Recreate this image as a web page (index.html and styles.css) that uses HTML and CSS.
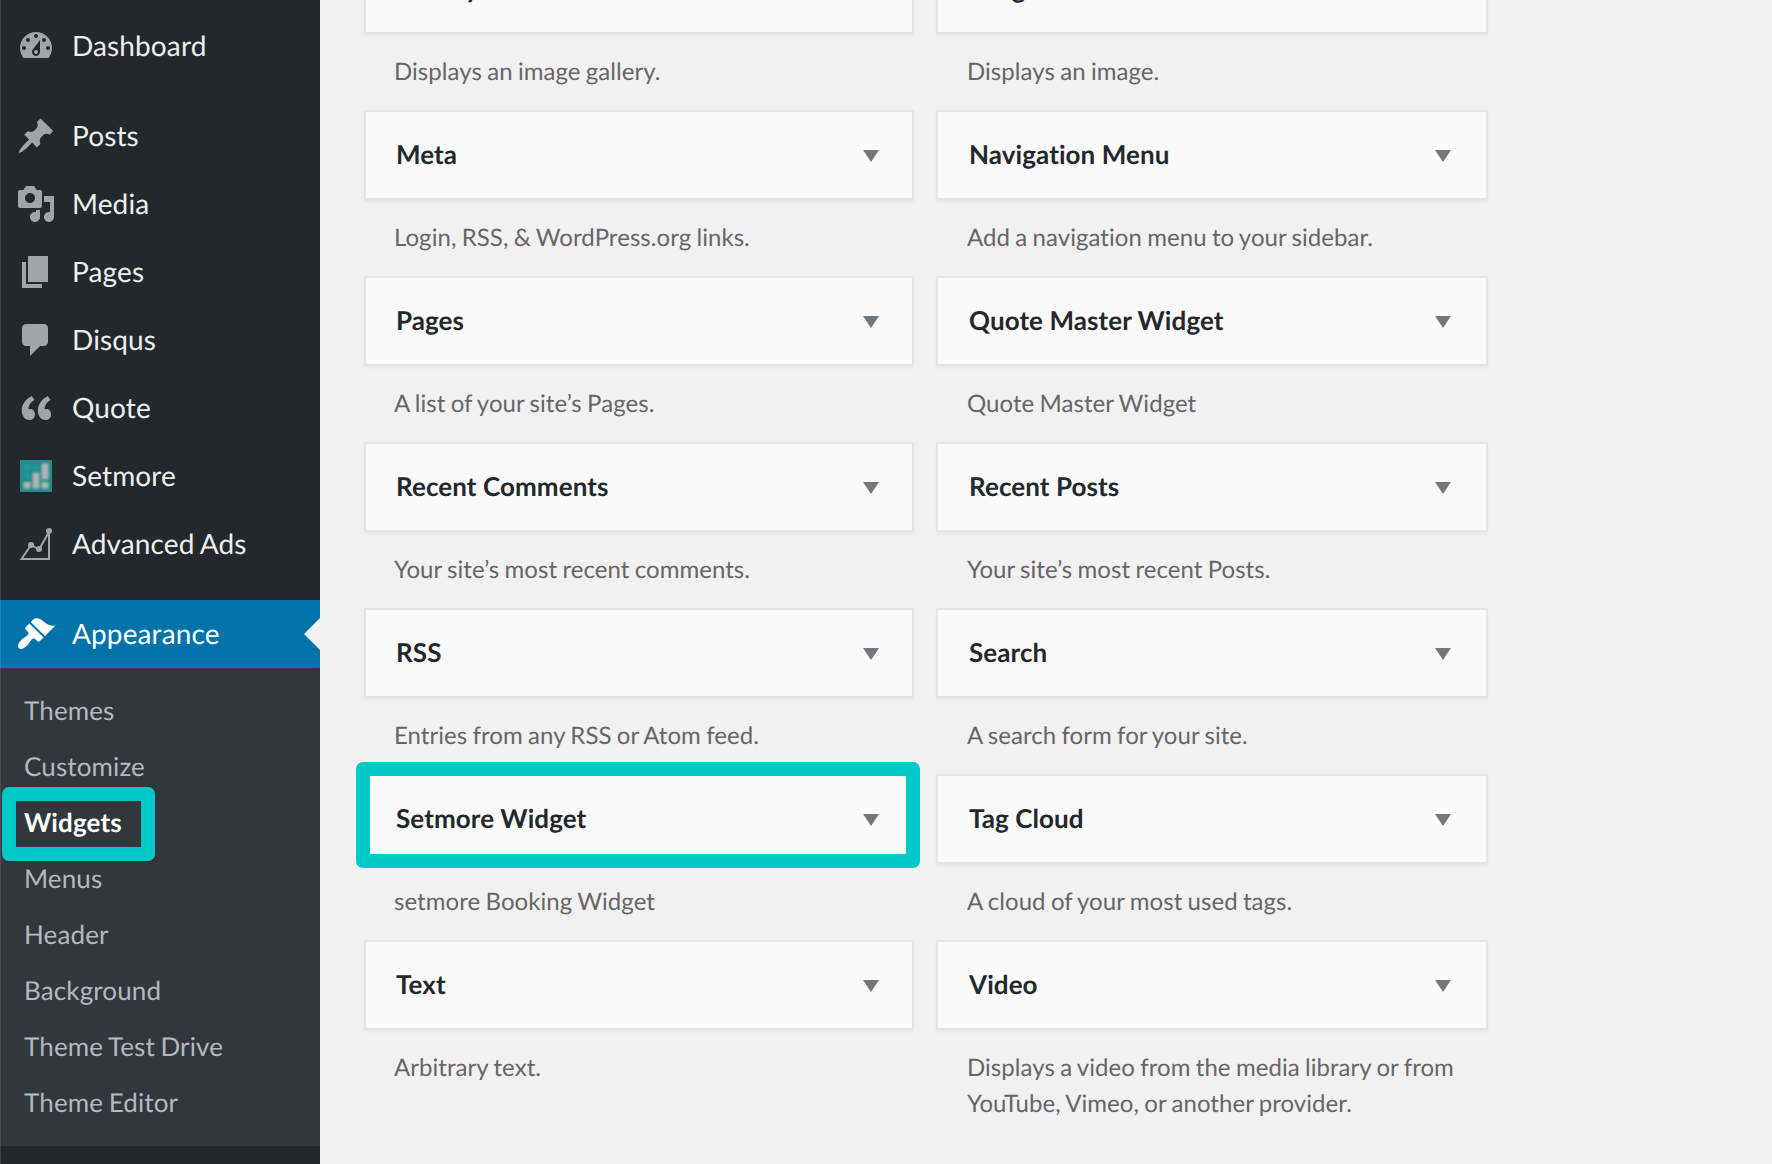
FILE: index.html
```html
<!DOCTYPE html>
<html lang="en">
<head>
<meta charset="utf-8">
<title>Widgets</title>
<link rel="stylesheet" href="styles.css">
</head>
<body>
<div class="layout">
  <nav class="sidebar">
    <ul class="menu">
      <li class="menu-item"><svg class="icon" viewBox="0 0 20 20"><path d="M3.76 16h12.48c1.1-1.37 1.76-3.11 1.76-5 0-4.42-3.58-8-8-8s-8 3.58-8 8c0 1.89.66 3.63 1.76 5zM10 4c.55 0 1 .45 1 1s-.45 1-1 1-1-.45-1-1 .45-1 1-1zM6 6c.55 0 1 .45 1 1s-.45 1-1 1-1-.45-1-1 .45-1 1-1zm8 0c.55 0 1 .45 1 1s-.45 1-1 1-1-.45-1-1 .45-1 1-1zm-5.37 5.55L12 7v6c0 1.1-.9 2-2 2s-2-.9-2-2c0-.57.24-1.08.63-1.45zM4 10c.55 0 1 .45 1 1s-.45 1-1 1-1-.45-1-1 .45-1 1-1zm12 0c.55 0 1 .45 1 1s-.45 1-1 1-1-.45-1-1 .45-1 1-1zm-5 3c0-.55-.45-1-1-1s-1 .45-1 1 .45 1 1 1 1-.45 1-1z"/></svg><span>Dashboard</span></li>
      <li class="menu-item group-start"><svg class="icon" viewBox="0 0 20 20"><path d="M10.44 3.02l1.82-1.82 6.36 6.35-1.83 1.82c-1.05-.68-2.48-.57-3.41.36l-.75.75c-.92.93-1.04 2.35-.35 3.41l-1.83 1.82-2.41-2.41-2.8 2.79c-.42.42-3.38 2.71-3.8 2.29s1.86-3.39 2.28-3.81l2.79-2.79L4.1 9.36l1.83-1.82c1.05.69 2.48.57 3.4-.36l.75-.75c.93-.92 1.05-2.35.36-3.41z"/></svg><span>Posts</span></li>
      <li class="menu-item"><svg class="icon" viewBox="0 0 20 20"><path d="M13 11V4c0-.55-.45-1-1-1h-1.67L9 1H5L3.67 3H2c-.55 0-1 .45-1 1v7c0 .55.45 1 1 1h10c.55 0 1-.45 1-1zM7 4.5c1.38 0 2.5 1.12 2.5 2.5S8.38 9.5 7 9.5 4.500 8.38 4.500 7 5.62 4.500 7 4.500zM14 6h5v10.500c0 1.38-1.12 2.500-2.500 2.500S14 17.88 14 16.500s1.12-2.500 2.500-2.500c.17 0 .34.02.5.05V9h-3V6zm-4 8.05V13h2v3.500c0 1.38-1.12 2.500-2.500 2.500S7 17.88 7 16.500 8.12 14 9.500 14c.17 0 .34.02.5.05z"/></svg><span>Media</span></li>
      <li class="menu-item"><svg class="icon" viewBox="0 0 20 20"><path d="M6 15V2h10v13H6zm-1 1h8v2H3V5h2v11z"/></svg><span>Pages</span></li>
      <li class="menu-item"><svg class="icon" viewBox="0 0 20 20"><path d="M5 2h9c1.1 0 2 .9 2 2v7c0 1.1-.9 2-2 2h-2l-5 5v-5H5c-1.1 0-2-.9-2-2V4c0-1.1.9-2 2-2z"/></svg><span>Disqus</span></li>
      <li class="menu-item"><svg class="icon" viewBox="0 0 20 20"><path d="M9.49 13.22c0-.74-.2-1.38-.61-1.9-.62-.78-1.83-.88-2.53-.72-.29-1.65 1.11-3.75 2.92-4.65L7.88 4c-2.73 1.3-5.42 4.28-4.96 8.05C3.21 14.43 4.59 16 6.54 16c.85 0 1.56-.25 2.12-.75s.83-1.18.83-2.03zm8.05 0c0-.74-.2-1.38-.61-1.9-.63-.78-1.83-.88-2.53-.72-.29-1.65 1.11-3.75 2.92-4.65L15.93 4c-2.73 1.3-5.41 4.28-4.95 8.05.29 2.38 1.66 3.95 3.61 3.95.85 0 1.56-.25 2.12-.75s.83-1.18.83-2.03z"/></svg><span>Quote</span></li>
      <li class="menu-item"><svg class="icon" viewBox="0 0 40 40"><path class="sm-bg" d="M4 4h32v32H4z"/><g class="sm-cells"><path d="M8 8h6v6H8zM16 8h7v6h-7zM8 16h6v7H8z"/></g><g class="sm-bars"><path d="M7.500 26h7v6.500h-7zM16.500 16.500h7v16h-7zM25.500 7.500h7v16h-7zM25.500 26h7v6.500h-7z"/></g></svg><span>Setmore</span></li>
      <li class="menu-item"><svg class="icon" viewBox="0 0 40 40"><path class="chart-line" d="M5.500 35L15 21l8 4.500L33 8v27z"/><circle cx="15" cy="21" r="3"/><circle cx="23" cy="25" r="3"/><circle cx="33" cy="7" r="3"/></svg><span>Advanced Ads</span></li>
      <li class="menu-item group-start current"><svg class="icon" viewBox="0 0 20 20"><path d="M14.48 11.06L7.41 3.99l1.5-1.5c.5-.56 2.3-.47 3.51.32 1.21.8 1.43 1.28 2.91 2.1 1.18.64 2.45 1.26 4.45.85zm-.71.71L6.7 4.7 4.93 6.47c-.39.39-.39 1.02 0 1.41l1.06 1.06c.39.39.39 1.03 0 1.42-.6.6-1.43 1.11-2.21 1.69-.35.26-.7.53-1.01.84C1.43 14.23.4 16.08 1.4 17.07c.99 1 2.84-.03 4.18-1.36.31-.31.58-.66.85-1.02.57-.78 1.08-1.61 1.69-2.21.39-.39 1.02-.39 1.41 0l1.06 1.06c.39.39 1.02.39 1.41 0z"/></svg><span>Appearance</span></li>
    </ul>
    <ul class="submenu">
      <li>Themes</li>
      <li>Customize</li>
      <li class="active">Widgets</li>
      <li>Menus</li>
      <li>Header</li>
      <li>Background</li>
      <li>Theme Test Drive</li>
      <li>Theme Editor</li>
    </ul>
  </nav>
  <main class="widgets">
    <section class="widget"><h3 class="card">Gallery<i class="arrow"></i></h3><p>Displays an image gallery.</p></section>
    <section class="widget"><h3 class="card">Image<i class="arrow"></i></h3><p>Displays an image.</p></section>
    <section class="widget"><h3 class="card">Meta<i class="arrow"></i></h3><p>Login, RSS, &amp; WordPress.org links.</p></section>
    <section class="widget"><h3 class="card">Navigation Menu<i class="arrow"></i></h3><p>Add a navigation menu to your sidebar.</p></section>
    <section class="widget"><h3 class="card">Pages<i class="arrow"></i></h3><p>A list of your site’s Pages.</p></section>
    <section class="widget"><h3 class="card">Quote Master Widget<i class="arrow"></i></h3><p>Quote Master Widget</p></section>
    <section class="widget"><h3 class="card">Recent Comments<i class="arrow"></i></h3><p>Your site’s most recent comments.</p></section>
    <section class="widget"><h3 class="card">Recent Posts<i class="arrow"></i></h3><p>Your site’s most recent Posts.</p></section>
    <section class="widget"><h3 class="card">RSS<i class="arrow"></i></h3><p>Entries from any RSS or Atom feed.</p></section>
    <section class="widget"><h3 class="card">Search<i class="arrow"></i></h3><p>A search form for your site.</p></section>
    <section class="widget"><h3 class="card highlighted">Setmore Widget<i class="arrow"></i></h3><p>setmore Booking Widget</p></section>
    <section class="widget"><h3 class="card">Tag Cloud<i class="arrow"></i></h3><p>A cloud of your most used tags.</p></section>
    <section class="widget"><h3 class="card">Text<i class="arrow"></i></h3><p>Arbitrary text.</p></section>
    <section class="widget"><h3 class="card">Video<i class="arrow"></i></h3><p>Displays a video from the media library or from YouTube, Vimeo, or another provider.</p></section>
  </main>
</div>
</body>
</html>
```
FILE: styles.css
```css
*, *::before, *::after { box-sizing: border-box; }
body {
  margin: 0;
  background: #f1f1f1;
  font-family: Lato, "Liberation Sans", sans-serif;
  font-variant-ligatures: none;
  text-rendering: geometricPrecision;
  overflow: hidden;
}
ul { list-style: none; margin: 0; padding: 0; }
.layout { display: flex; height: 1164px; overflow: hidden; }

.sidebar {
  position: relative;
  flex: none;
  width: 320px;
  padding-top: 12px;
  background: #23282d;
  color: #eee;
  letter-spacing: .12px;
  word-spacing: -1.2px;
}
.sidebar::before {
  content: "";
  position: absolute;
  z-index: 1;
  inset: 0 auto 0 0;
  width: 1px;
  background: rgba(255, 255, 255, .12);
}
.menu-item {
  position: relative;
  display: flex;
  align-items: center;
  gap: 16px;
  height: 68px;
  padding-left: 16px;
  font-size: 28px;
  line-height: 36px;
}
.menu-item span { padding-bottom: 2px; }
.group-start { margin-top: 22px; }
.icon { flex: none; width: 40px; height: 40px; fill: #a0a5aa; }
.current { background: #0073aa; color: #fff; }
.current .icon { fill: #fff; }
.current::after {
  content: "";
  position: absolute;
  right: 0;
  top: 18px;
  border: 16px solid transparent;
  border-left-width: 0;
  border-right-color: #f1f1f1;
}
.sm-bg { fill: #258a89; }
.sm-cells { fill: #219a98; filter: blur(.8px); }
.sm-bars { fill: #b0b3b6; filter: blur(.8px); }
.chart-line { fill: none; stroke: #a0a5aa; stroke-width: 2; }

.submenu {
  padding: 14px 0 16px;
  background: #32373c;
  color: #b4b9be;
  font-size: 26px;
  line-height: 56px;
}
.submenu li { position: relative; height: 56px; padding-left: 24px; }
.submenu .active { color: #fff; font-weight: 700; }
.submenu .active::after {
  content: "";
  position: absolute;
  left: 2px;
  top: -7px;
  width: 153px;
  height: 74px;
  border: 14px solid #00c9c8;
  border-radius: 7px;
}

.widgets {
  display: grid;
  grid-template-columns: 550px 552px;
  grid-auto-rows: 166px;
  column-gap: 22px;
  margin: -56px 0 0 44px;
}
.card {
  position: relative;
  display: flex;
  align-items: center;
  justify-content: space-between;
  height: 90px;
  margin: 0;
  padding: 0 33.5px 2px 30px;
  border: 2px solid #e5e5e5;
  background: #fafafa;
  box-shadow: 0 2px 2px rgba(0, 0, 0, .04);
  color: #23282d;
  font-size: 26px;
  font-weight: 700;
  letter-spacing: .08px;
}
.arrow {
  margin-top: 4px;
  border: 8px solid transparent;
  border-top: 12px solid #72777c;
  border-bottom: 0;
}
.highlighted::after {
  content: "";
  position: absolute;
  inset: -14px -8px -6px -10px;
  border: 14px solid #00c9c8;
  border-radius: 7px;
}
.widget p {
  margin: 0;
  padding: 20px 20px 0 30px;
  color: #666;
  font-size: 24px;
  line-height: 36px;
  letter-spacing: .05px;
  word-spacing: -.9px;
}
.widget:nth-child(even) .card { padding-left: 31px; padding-right: 35px; }
.widget:nth-child(even) p { padding-left: 31px; }
```
